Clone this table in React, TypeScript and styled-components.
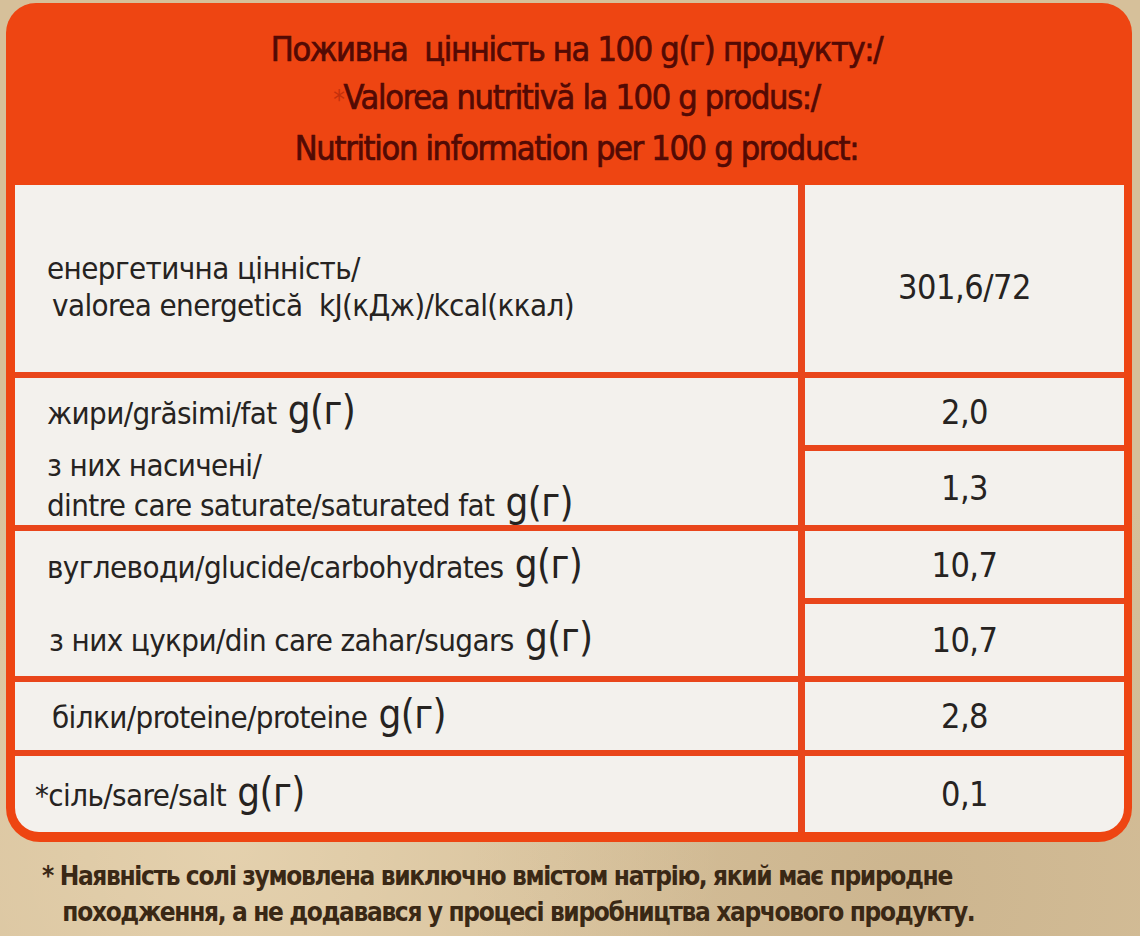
import React from 'react';
import styled, { createGlobalStyle } from 'styled-components';

const GlobalStyle = createGlobalStyle`
  html, body {
    margin: 0;
    height: 936px;
    overflow: hidden;
    background-color: #d6c09a;
  }
  body {
    font-family: "Liberation Sans Narrow", "DejaVu Sans Condensed", "Open Sans", sans-serif;
    font-stretch: condensed;
  }
`;

const ORANGE = '#ee4512';
const LINE = '#e9461b';
const CELL = '#f3f1ed';

const Page = styled.div`
  padding: 3px 8px 0 6px;
  background:
    radial-gradient(circle at 20% 90%, rgba(255, 240, 210, 0.35), transparent 40%),
    radial-gradient(circle at 80% 95%, rgba(150, 120, 80, 0.15), transparent 35%),
    #d6c09a;
  height: 936px;
  box-sizing: border-box;
`;

const Panel = styled.div`
  background-color: ${ORANGE};
  border-radius: 30px 30px 34px 34px;
  padding: 0 8px 10px 9px;
`;

const Header = styled.div`
  height: 182px;
  box-sizing: border-box;
  padding: 8px 0 0 14px;
  display: flex;
  flex-direction: column;
  align-items: center;
  justify-content: center;
  color: #520a04;
  font-size: 34px;
  line-height: 48px;
  letter-spacing: -1.3px;
  -webkit-text-stroke: 0.7px #520a04;
  white-space: nowrap;
`;

const Star = styled.span`
  color: #c3300c;
  -webkit-text-stroke: 0;
  font-size: 26px;
`;

const Table = styled.div`
  display: grid;
  grid-template-columns: 783px 1fr;
  grid-template-rows: 187px 67px 74px 67px 72px 68px 76px;
  gap: 6px 7px;
  background-color: ${LINE};
  border-radius: 0 0 24px 24px;
  overflow: hidden;
`;

const Cell = styled.div<{ $span?: number; $indent?: number }>`
  background-color: ${CELL};
  grid-row: span ${(p) => p.$span || 1};
  display: flex;
  flex-direction: column;
  justify-content: center;
  padding-left: ${(p) => 32 + (p.$indent || 0)}px;
  color: #262321;
  font-size: 31px;
  line-height: 37px;
  letter-spacing: -0.6px;
`;

const Part = styled.div<{ $h: number }>`
  height: ${(p) => p.$h}px;
  display: flex;
  flex-direction: column;
  justify-content: center;
`;

const Line = styled.div<{ $indent?: number }>`
  white-space: nowrap;
  padding-left: ${(p) => p.$indent || 0}px;
`;

const Unit = styled.span`
  font-size: 40px;
  margin-left: 3px;
`;

const Value = styled.div`
  background-color: ${CELL};
  display: flex;
  align-items: center;
  justify-content: center;
  color: #262321;
  font-size: 34px;
  letter-spacing: -0.5px;
`;

const Footnote = styled.div`
  padding: 16px 0 0 36px;
  color: #3a2815;
  font-weight: bold;
  font-size: 26px;
  line-height: 36px;
  letter-spacing: -1.35px;
  white-space: nowrap;
`;

const G = () => <Unit>g(г)</Unit>;

const App: React.FC = () => {
  return (
    <Page>
      <GlobalStyle />
      <Panel>
        <Header>
          <div>Поживна&nbsp; цінність на 100 g(г) продукту:/</div>
          <div>
            <Star>*</Star>Valorea nutritivă la 100 g produs:/
          </div>
          <div>Nutrition information per 100 g product:</div>
        </Header>
        <Table>
          <Cell style={{ paddingTop: 16 }}>
            <Line>енергетична цінність/</Line>
            <Line $indent={5}>valorea energetică&nbsp; kJ(кДж)/kcal(ккал)</Line>
          </Cell>
          <Value style={{ paddingTop: 16 }}>301,6/72</Value>

          <Cell $span={2}>
            <Part $h={67}>
              <Line>
                жири/grăsimi/fat <G />
              </Line>
            </Part>
            <Part $h={80}>
              <Line>з них насичені/</Line>
              <Line>
                dintre care saturate/saturated fat <G />
              </Line>
            </Part>
          </Cell>
          <Value>2,0</Value>
          <Value>1,3</Value>

          <Cell $span={2}>
            <Part $h={70}>
              <Line>
                вуглеводи/glucide/carbohydrates <G />
              </Line>
            </Part>
            <Part $h={75}>
              <Line $indent={2}>
                з них цукри/din care zahar/sugars <G />
              </Line>
            </Part>
          </Cell>
          <Value>10,7</Value>
          <Value>10,7</Value>

          <Cell $indent={5}>
            <Line>
              білки/proteine/proteine <G />
            </Line>
          </Cell>
          <Value>2,8</Value>

          <Cell $indent={-12}>
            <Line>
              *сіль/sare/salt <G />
            </Line>
          </Cell>
          <Value>0,1</Value>
        </Table>
      </Panel>
      <Footnote>
        <div>* Наявність солі зумовлена виключно вмістом натрію, який має природне</div>
        <div>&nbsp;&nbsp;&nbsp;походження, а не додавався у процесі виробництва харчового продукту.</div>
      </Footnote>
    </Page>
  );
};

export default App;
